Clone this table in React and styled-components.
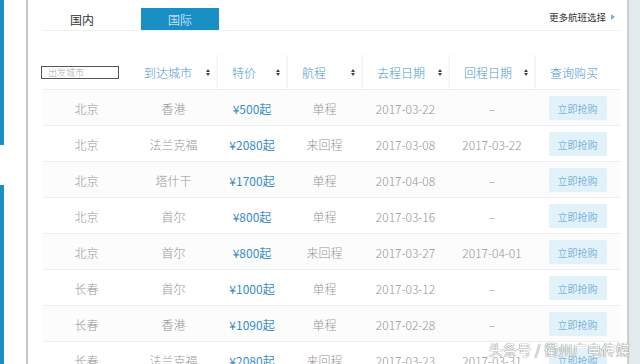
import React from 'react';
import styled, { createGlobalStyle } from 'styled-components';

const GlobalStyle = createGlobalStyle`
  html, body {
    margin: 0;
    padding: 0;
    background: #fff;
    font-family: "Noto Sans CJK SC", "Noto Sans", sans-serif;
  }
`;

const Page = styled.div`
  position: relative;
  display: flex;
  width: 640px;
  height: 364px;
  overflow: hidden;
  background: #fff;
`;

const LeftRail = styled.div`
  width: 26px;
  display: flex;
  flex-direction: column;
  border-right: 2px solid #c3cacd;
`;

const RailBar = styled.div`
  width: 4px;
  height: ${p => p.h}px;
  margin-bottom: ${p => p.gap || 0}px;
  background: #1b8ec4;
  flex-shrink: 0;
`;

const Main = styled.div`
  flex: 1;
  padding: 0 7px 0 15px;
  display: flex;
  flex-direction: column;
`;

const RightRail = styled.div`
  width: 11px;
  border-left: 2px solid #c7d0d4;
  background: #e2eaee;
`;

const TabBar = styled.div`
  display: flex;
  align-items: flex-end;
  flex-shrink: 0;
  height: 22px;
  padding-top: 8px;
  border-bottom: 1px solid #eef0f1;
`;

const Tab = styled.div`
  width: 78px;
  height: 22px;
  margin-right: 20px;
  display: flex;
  align-items: center;
  justify-content: center;
  font-size: 12px;
  font-weight: ${p => (p.active ? 300 : 400)};
  color: ${p => (p.active ? '#fff' : '#333')};
  background: ${p => (p.active ? '#1a8fc6' : 'transparent')};
`;

const MoreLink = styled.div`
  margin-left: auto;
  margin-right: 5px;
  align-self: center;
  margin-top: -4px;
  display: flex;
  align-items: center;
  gap: 5px;
  font-size: 9.5px;
  color: #333;
`;

const Arrow = styled.span`
  width: 0;
  height: 0;
  border-top: 3px solid transparent;
  border-bottom: 3px solid transparent;
  border-left: 4px solid #7ab0d4;
`;

const cols = '87px 87px 70px 75px 87px 86px 85px';

const HeadRow = styled.div`
  display: grid;
  grid-template-columns: ${cols};
  flex-shrink: 0;
  height: 34px;
  margin-top: 24px;
  border-bottom: 1px solid #eceeef;
`;

const HeadCell = styled.div`
  display: flex;
  align-items: center;
  padding: 0 7px 0 14px;
  font-size: 12px;
  font-weight: 300;
  color: #4b97c9;
  border-left: ${p => (p.divider ? '1px solid #f1f2f3' : 'none')};
  box-shadow: ${p => (p.divider ? '-1px 0 2px rgba(0,0,0,0.03)' : 'none')};
`;

const SearchBox = styled.div`
  width: 70px;
  height: 11px;
  margin-left: -16px;
  border: 1px solid #555;
  font-size: 9px;
  line-height: 11px;
  padding-left: 6px;
  color: #aaa;
`;

const SortIcon = styled.span`
  margin-left: auto;
  display: flex;
  flex-direction: column;
  gap: 1px;
  &::before, &::after {
    content: '';
    width: 0;
    height: 0;
    border-left: 2.5px solid transparent;
    border-right: 2.5px solid transparent;
  }
  &::before { border-bottom: 3px solid #444; }
  &::after { border-top: 3px solid #444; }
`;

const Row = styled.div`
  display: grid;
  grid-template-columns: ${cols};
  flex-shrink: 0;
  height: 35px;
  border-bottom: 1px solid #eeeff0;
  background: ${p => (p.odd ? '#fcfcfc' : '#fff')};
`;

const Cell = styled.div`
  display: flex;
  align-items: center;
  justify-content: center;
  padding-top: 1px;
  font-size: 12px;
  font-weight: ${p => (p.price ? 400 : 300)};
  color: ${p => (p.price ? '#3a8cc6' : '#959595')};
`;

const BuyButton = styled.div`
  width: 58px;
  height: 24px;
  display: flex;
  align-items: center;
  justify-content: center;
  background: #e2f2fa;
  border-radius: 2px;
  font-size: 10px;
  font-weight: 300;
  color: #4b94c8;
`;

const Watermark = styled.div`
  position: absolute;
  right: 10px;
  bottom: 5px;
  font-size: 14px;
  color: #fff;
  text-shadow: 0 0 1px #666, 0 0 1px #888;
  letter-spacing: 0.3px;
`;

const flights = [
  ['北京', '香港', '¥500起', '单程', '2017-03-22', '–'],
  ['北京', '法兰克福', '¥2080起', '来回程', '2017-03-08', '2017-03-22'],
  ['北京', '塔什干', '¥1700起', '单程', '2017-04-08', '–'],
  ['北京', '首尔', '¥800起', '单程', '2017-03-16', '–'],
  ['北京', '首尔', '¥800起', '来回程', '2017-03-27', '2017-04-01'],
  ['长春', '首尔', '¥1000起', '单程', '2017-03-12', '–'],
  ['长春', '香港', '¥1090起', '单程', '2017-02-28', '–'],
  ['长春', '法兰克福', '¥2080起', '来回程', '2017-03-23', '2017-03-31'],
];

const headers = ['到达城市', '特价', '航程', '去程日期', '回程日期'];

export default function App() {
  return (
    <Page>
      <GlobalStyle />
      <LeftRail>
        <RailBar h={145} gap={40} />
        <RailBar h={179} />
      </LeftRail>
      <Main>
        <TabBar>
          <Tab>国内</Tab>
          <Tab active>国际</Tab>
          <MoreLink>
            更多航班选择 <Arrow />
          </MoreLink>
        </TabBar>

        <HeadRow>
          <HeadCell>
            <SearchBox>出发城市</SearchBox>
          </HeadCell>
          {headers.map((h, i) => (
            <HeadCell key={h} divider={i > 0}>
              {h}
              <SortIcon />
            </HeadCell>
          ))}
          <HeadCell divider>查询购买</HeadCell>
        </HeadRow>

        {flights.map((f, i) => (
          <Row key={i} odd={i % 2 === 0}>
            <Cell>{f[0]}</Cell>
            <Cell>{f[1]}</Cell>
            <Cell price>{f[2]}</Cell>
            <Cell>{f[3]}</Cell>
            <Cell>{f[4]}</Cell>
            <Cell>{f[5]}</Cell>
            <Cell>
              <BuyButton>立即抢购</BuyButton>
            </Cell>
          </Row>
        ))}
      </Main>
      <RightRail />
      <Watermark>头条号 / 衢州广电传媒</Watermark>
    </Page>
  );
}
